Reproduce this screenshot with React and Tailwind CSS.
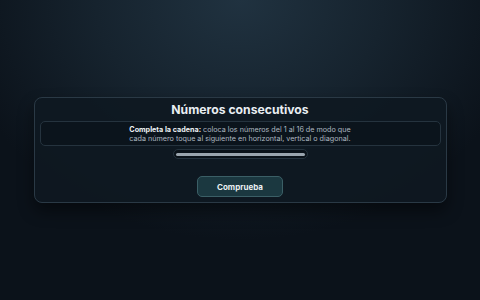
import React from 'react';

const App = () => {
  return (
    <div
      className="flex h-[300px] w-[480px] items-center justify-center bg-[#0b121a] bg-[radial-gradient(ellipse_60%_80%_at_50%_0%,#203240_0%,#16232e_50%,#0b121a_100%)]"
      style={{ fontFamily: 'Inter, "Noto Sans", sans-serif' }}
    >
      <div className="flex w-[413px] flex-col items-center rounded-[8px] border border-[#2a3945] bg-[#0e1821]/90 px-[5px] pb-[5px] pt-[1px] shadow-[0_8px_16px_rgba(0,0,0,0.45)]">
        <h1 className="text-[12.2px] font-bold leading-[21px] text-[#e9eef2]">Números consecutivos</h1>
        <div className="mt-[1px] flex h-[25px] w-full flex-col items-center justify-center rounded-[5px] border border-[#25333e] bg-[#0b141c]">
          <p className="text-[7.2px] leading-[9px] text-[#aeb8c0]">
            <span className="font-bold text-[#eef2f5]">Completa la cadena:</span> coloca los números del 1 al 16 de modo que
            <br />
            cada número toque al siguiente en horizontal, vertical o diagonal.
          </p>
        </div>
        <div className="mt-[3px] flex h-[10px] w-[135px] items-center rounded-full border border-[#24323d] bg-[#0a1219] px-[2px]">
          <div className="h-[3px] w-full rounded-full bg-[#9aa5ae]" />
        </div>
        <button className="mt-[17px] h-[21px] w-[86px] rounded-[5px] border border-[#3b5f66] bg-[#1b3840] text-[8px] font-bold text-[#e9f0f2]">
          Comprueba
        </button>
      </div>
    </div>
  );
};

export default App;
